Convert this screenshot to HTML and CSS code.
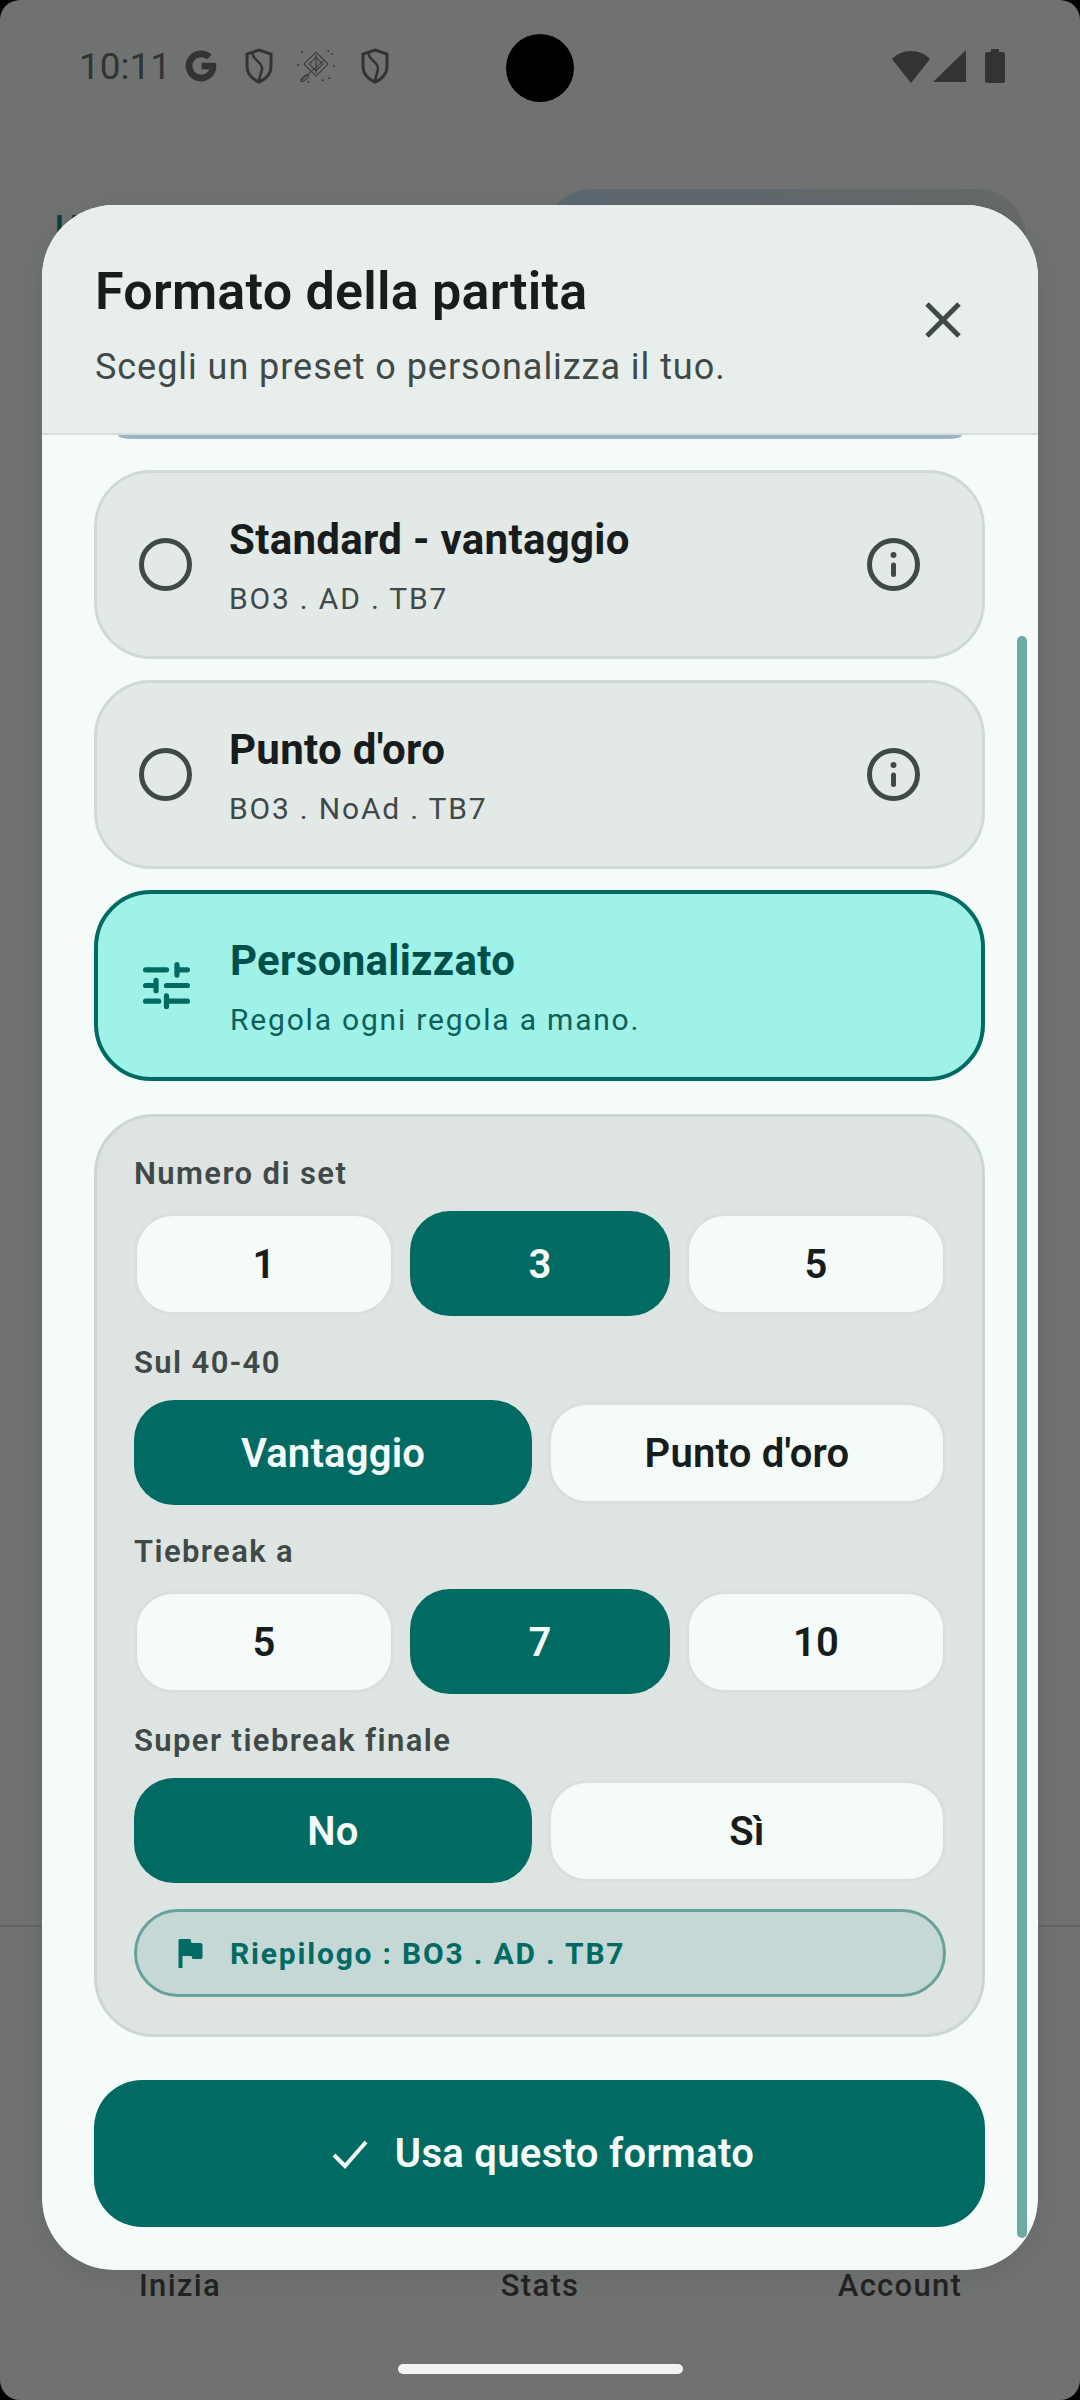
FILE: index.html
```html
<!DOCTYPE html>
<html lang="it">
<head>
<meta charset="utf-8">
<title>Formato della partita</title>
<link rel="stylesheet" href="styles.css">
</head>
<body>
<div class="screen">
  <div class="backdrop">
    <div class="status">
      <span class="clock">10:11</span>
      <svg class="st-g" viewBox="0 0 32 32"><path d="M16 1.500a14.500 14.500 0 1 0 14.300 17V13H16.500v6h7.400A8.300 8.300 0 1 1 16 7.700c2.200 0 4 .8 5.500 2.100l4.400-4.400A14.400 14.400 0 0 0 16 1.500z"/></svg>
      <svg class="st-shield" viewBox="0 0 28 36"><path d="M14 2 26 6v12c0 8-5 13-12 16C7 31 2 26 2 18V6z" fill="none" stroke-width="3"/><path d="M8 5c-2 6 10 9 9 16-.3 3-2 6-3 12" fill="none" stroke-width="2.600"/></svg>
      <svg class="st-diamond" viewBox="0 0 40 36"><g fill="none" stroke-width="1"><rect x="11" y="7" width="18" height="18" transform="rotate(45 20 16)"/><rect x="15" y="11" width="10" height="10" transform="rotate(45 20 16)"/><path d="M4 34 28 12M20 6v20"/><ellipse cx="8" cy="31" rx="5" ry="2" transform="rotate(-40 8 31)"/></g><g class="dots"><circle cx="5" cy="3" r="1"/><circle cx="33" cy="2" r="1"/><circle cx="37" cy="5" r="1"/><circle cx="1" cy="17" r="1"/><circle cx="39" cy="18" r="1"/><circle cx="34" cy="31" r="1"/><circle cx="27" cy="33" r="1"/><circle cx="12" cy="35" r="1"/></g></svg>
      <svg class="st-shield last" viewBox="0 0 28 36"><path d="M14 2 26 6v12c0 8-5 13-12 16C7 31 2 26 2 18V6z" fill="none" stroke-width="3"/><path d="M8 5c-2 6 10 9 9 16-.3 3-2 6-3 12" fill="none" stroke-width="2.600"/></svg>
      <span class="status-gap"></span>
      <svg class="st-wifi" viewBox="0 0 40 33"><path d="M20 33 1 9C6 4 12 1 20 1s14 3 19 8z"/></svg>
      <svg class="st-signal" viewBox="0 0 33 32"><path d="M33 0v32H0z"/></svg>
      <svg class="st-batt" viewBox="0 0 20 34"><path d="M6 0h8v3h4a2 2 0 0 1 2 2v27a2 2 0 0 1-2 2H2a2 2 0 0 1-2-2V5a2 2 0 0 1 2-2h4z"/></svg>
    </div>
    <div class="bg-row">
      <span class="bg-text">U</span>
      <div class="bg-card"></div>
    </div>
    <div class="bg-nav">
      <span>Inizia</span><span>Stats</span><span>Account</span>
    </div>
    <div class="home-row"><span class="home-pill"></span></div>
  </div>

  <span class="camera"></span>

  <section class="sheet">
    <header class="sheet-head">
      <div>
        <h1 class="sheet-title">Formato della partita</h1>
        <p class="sheet-sub">Scegli un preset o personalizza il tuo.</p>
      </div>
      <svg class="close" viewBox="0 0 38 38"><path d="M3 3l32 32M35 3 3 35"/></svg>
    </header>
    <div class="sheet-body">
      <span class="peek"></span>
      <span class="scrollbar"></span>

      <div class="option">
        <svg class="opt-icon" viewBox="0 0 53 53"><circle cx="26.500" cy="26.500" r="24"/></svg>
        <div class="opt-text">
          <div class="opt-title">Standard - vantaggio</div>
          <div class="opt-sub">BO3 . AD . TB7</div>
        </div>
        <svg class="opt-icon" viewBox="0 0 53 53"><circle cx="26.500" cy="26.500" r="24"/><path class="i-stem" d="M26.500 27v9.500"/><circle class="i-dot" cx="26.500" cy="17" r="3"/></svg>
      </div>

      <div class="option">
        <svg class="opt-icon" viewBox="0 0 53 53"><circle cx="26.500" cy="26.500" r="24"/></svg>
        <div class="opt-text">
          <div class="opt-title">Punto d'oro</div>
          <div class="opt-sub">BO3 . NoAd . TB7</div>
        </div>
        <svg class="opt-icon" viewBox="0 0 53 53"><circle cx="26.500" cy="26.500" r="24"/><path class="i-stem" d="M26.500 27v9.500"/><circle class="i-dot" cx="26.500" cy="17" r="3"/></svg>
      </div>

      <div class="option selected">
        <svg class="tune" viewBox="3 3 18 18"><path d="M4 6h8M16 4v4M16 6h4M4 12h4M8 10v4M12 12h8M4 18h5M12 16v4M12 18h8"/></svg>
        <div class="opt-text">
          <div class="opt-title">Personalizzato</div>
          <div class="opt-sub">Regola ogni regola a mano.</div>
        </div>
      </div>

      <div class="panel">
        <div class="group">
          <div class="label">Numero di set</div>
          <div class="choices"><span class="choice">1</span><span class="choice on">3</span><span class="choice">5</span></div>
        </div>
        <div class="group">
          <div class="label">Sul 40-40</div>
          <div class="choices"><span class="choice on">Vantaggio</span><span class="choice">Punto d'oro</span></div>
        </div>
        <div class="group">
          <div class="label">Tiebreak a</div>
          <div class="choices"><span class="choice">5</span><span class="choice on">7</span><span class="choice">10</span></div>
        </div>
        <div class="group">
          <div class="label">Super tiebreak finale</div>
          <div class="choices"><span class="choice on">No</span><span class="choice">Sì</span></div>
        </div>
        <div class="summary">
          <svg class="flag" viewBox="0 0 24 30"><path d="M0 2a2 2 0 0 1 2-1h10l1 4h9a2 2 0 0 1 2 2v12a2 2 0 0 1-2 2h-8l-1-3H4v12H0z"/></svg>
          <span>Riepilogo : BO3 . AD . TB7</span>
        </div>
      </div>

      <div class="cta">
        <svg class="check" viewBox="0 0 36 30"><path d="M2 16l11 11L34 3"/></svg>
        <span>Usa questo formato</span>
      </div>
    </div>
  </section>
</div>
</body>
</html>
```

FILE: styles.css
```css
* { box-sizing: border-box; }
html, body { margin: 0; padding: 0; }
body { font-family: Roboto, "Noto Sans", sans-serif; background: #000; }
.screen { position: relative; width: 1080px; height: 2400px; overflow: hidden; border-radius: 20px; background: #707271; }
.backdrop { display: flex; flex-direction: column; height: 100%; }

.status { display: flex; align-items: center; height: 132px; padding: 0 75px 0 79px; fill: #313433; stroke: #313433; }
.clock { font-size: 37px; color: #313433; width: 105px; }
.st-g { width: 34px; height: 34px; stroke: none; }
.st-shield { width: 28px; height: 36px; margin-left: 27px; fill: none; }
.st-shield.last { margin-left: 26px; }
.st-diamond { width: 38px; height: 34px; margin-left: 24px; fill: none; }
.dots { fill: #313433; stroke: none; }
.status-gap { flex: 1; }
.st-wifi { width: 40px; height: 33px; stroke: none; }
.st-signal { width: 33px; height: 32px; margin-left: 2px; stroke: none; }
.st-batt { width: 20px; height: 34px; margin-left: 19px; stroke: none; }

.bg-row { display: flex; justify-content: space-between; padding: 57px 54px 0 55px; height: 200px; }
.bg-text { color: #0f3d39; font-size: 36px; line-height: 36px; font-weight: 500; margin-top: 22px; }
.bg-card { width: 482px; height: 143px; background: linear-gradient(90deg, #5c6770, #676968); border-radius: 48px 48px 0 0; }

.bg-nav { margin-top: auto; display: grid; grid-template-columns: repeat(3, 1fr); height: 475px; align-items: end; padding-bottom: 96px; border-top: 2px solid #626463; font-size: 31px; font-weight: 500; letter-spacing: 1.300px; color: #222423; text-align: center; }
.home-row { height: 36px; margin-top: -36px; display: flex; justify-content: center; }
.home-pill { width: 285px; height: 10px; border-radius: 5px; background: #f3f3f3; }

.camera { position: absolute; left: 506px; top: 34px; width: 68px; height: 68px; border-radius: 50%; background: #000; }

.sheet { position: absolute; left: 42px; top: 205px; width: 996px; height: 2065px; border-radius: 72px; overflow: hidden; background: #f5fbf8; box-shadow: 0 6px 24px rgba(0,0,0,.08); display: flex; flex-direction: column; }
.sheet-head { position: relative; z-index: 1; height: 230px; flex: none; display: flex; justify-content: space-between; align-items: flex-start; padding: 57px 76px 0 53px; background: #e8eeec; border-bottom: 2px solid #d5dedb; }
.sheet-title { margin: 0; font-size: 52px; line-height: 60px; font-weight: 600; letter-spacing: .25px; color: #171d1c; }
.sheet-sub { margin: 23px 0 0; font-size: 36px; line-height: 44px; font-weight: 400; letter-spacing: .95px; color: #3f4947; }
.close { width: 38px; height: 38px; margin-top: 39px; fill: none; stroke: #3f4947; stroke-width: 5; }

.sheet-body { position: relative; flex: 1; padding: 35px 53px 0 52px; display: flex; flex-direction: column; }
.peek { position: absolute; left: 76px; right: 76px; top: 0; height: 4px; background: #9db4c6; border-radius: 0 0 14px 14px / 0 0 4px 4px; }
.scrollbar { position: absolute; left: 975px; top: 201px; width: 10px; height: 1602px; border-radius: 5px; background: #6fa9a5; }

.option { display: flex; align-items: center; height: 189px; padding: 0 62px 0 42px; margin-bottom: 21px; background: #e3e9e7; border: 3px solid #cfd9d6; border-radius: 57px; }
.opt-icon { width: 53px; height: 53px; flex: none; fill: none; stroke: #3f4947; stroke-width: 5; }
.i-stem { stroke-linecap: round; stroke-width: 5; }
.i-dot { fill: #3f4947; stroke: none; }
.opt-text { flex: 1; margin-left: 37px; padding-top: 3px; }
.opt-title { font-size: 42px; line-height: 48px; font-weight: 700; letter-spacing: .3px; color: #171d1c; }
.opt-sub { margin-top: 17px; font-size: 30px; line-height: 36px; letter-spacing: 1.800px; color: #3f4947; }

.option.selected { height: 191px; margin-bottom: 33px; background: #9ef2e8; border: 4px solid #016b63; }
.selected .opt-title { color: #00504a; }
.selected .opt-sub { color: #0f5f58; }
.tune { width: 47px; height: 47px; flex: none; margin: 0 3px 0 3px; fill: none; stroke: #016b63; stroke-width: 2; stroke-linecap: round; }

.panel { height: 923px; padding: 39px 36px 0 37px; background: #dee4e2; border: 3px solid #ccd6d3; border-radius: 60px; margin-bottom: 43px; }
.group { height: 189px; }
.label { font-size: 31px; line-height: 36px; font-weight: 600; letter-spacing: 1.400px; color: #3f4947; }
.choices { display: grid; grid-auto-flow: column; grid-auto-columns: 1fr; gap: 16px; align-items: center; height: 105px; margin-top: 19px; }
.choice { display: flex; align-items: center; justify-content: center; height: 102px; padding-top: 1px; border-radius: 39px; border: 3px solid #d8dfdd; background: #f5fbf8; font-size: 40px; font-weight: 600; letter-spacing: .2px; color: #171d1c; }
.choice.on { height: 105px; border: 0; border-radius: 40px; background: #016b63; color: #f5fbf8; }

.summary { display: flex; align-items: center; height: 88px; margin-top: -3px; padding-left: 40px; border: 3px solid #66a29a; border-radius: 44px; background: #c6d8d6; color: #016b63; font-size: 30px; font-weight: 700; letter-spacing: 1.800px; }
.flag { width: 27px; height: 30px; margin-right: 26px; fill: #016b63; }

.cta { display: flex; align-items: center; justify-content: center; gap: 27px; height: 147px; padding-left: 7px; border-radius: 48px; background: #016b63; color: #f5fbf8; font-size: 40px; font-weight: 600; letter-spacing: .3px; }
.check { width: 36px; height: 30px; fill: none; stroke: #f5fbf8; stroke-width: 4; }
```
